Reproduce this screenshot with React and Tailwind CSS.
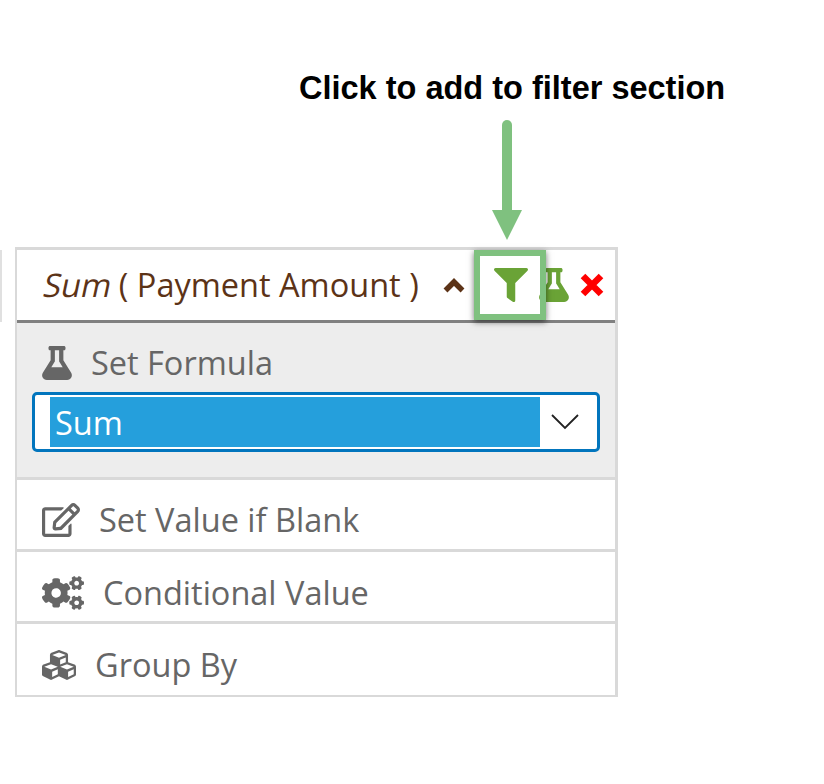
import { FaFlask, FaFilter, FaRegEdit, FaCogs, FaCubes } from 'react-icons/fa'

function Row({ icon, label, gap, height, pad }) {
  return (
    <div className={`flex items-center pl-[25px] ${pad} ${height} ${gap}`}>
      {icon}
      <span className="text-[32.5px] text-[#666]">{label}</span>
    </div>
  )
}

export default function App() {
  return (
    <div className="relative h-[784px] w-[824px] bg-white overflow-hidden font-['Open_Sans',sans-serif]">
      <h1 className="pt-[70px] pl-[299px] text-[32.5px] leading-[36px] font-bold text-black font-['Liberation_Sans',sans-serif] whitespace-nowrap">
        Click to add to filter section
      </h1>

      {/* arrow */}
      <svg className="absolute left-[490px] top-[120px]" width="34" height="122" viewBox="0 0 34 122">
        <path d="M17 5V92" stroke="#7fc17f" strokeWidth="10" strokeLinecap="round" fill="none" />
        <path d="M2 90H32L17 120Z" fill="#7fc17f" />
      </svg>

      {/* stub of the neighbouring panel */}
      <div className="absolute left-0 top-[250px] h-[72px] w-[2px] bg-[#e0e0e0]" />

      <div className="mt-[141px] ml-[15px] w-[603px] border-t-[3px] border-r-[3px] border-b-2 border-l-2 border-[#d9d9d9]">
        <div className="h-[73px] flex items-center pl-[27px] border-b-[3px] border-[#808080] text-[#5c3317]">
          <span className="inline-block text-[32.5px] -skew-x-12">Sum</span>
          <span className="text-[32.5px] ml-[7px]">( Payment Amount )</span>
          <svg className="ml-[24px]" width="22" height="15" viewBox="0 0 22 15">
            <path d="M2.5 12.5L11 4L19.5 12.5" stroke="#5c3317" strokeWidth="5.5" fill="none" />
          </svg>
          <FaFilter className="ml-[29px] text-[34px] text-[#6aa336]" />
          <FaFlask className="ml-[9px] text-[34px] text-[#6aa336]" />
          <svg className="ml-[9px]" width="24" height="24" viewBox="0 0 24 24">
            <path d="M3 3L21 21M21 3L3 21" stroke="#ff0000" strokeWidth="6.5" fill="none" />
          </svg>
        </div>

        <div className="h-[157px] bg-[#ededed] border-b-[3px] border-[#d9d9d9] pt-[20px] pl-[15px] pr-[15px]">
          <div className="flex items-center h-[40px] pl-[8px]">
            <FaFlask className="text-[34px] text-[#666]" />
            <span className="ml-[17px] text-[32.5px] text-[#666]">Set Formula</span>
          </div>
          <div className="mt-[9px] h-[60px] w-[568px] rounded-[5px] border-[3px] border-[#0275bd] bg-white flex items-center pl-[15px]">
            <div className="w-[490px] h-[50px] bg-[#259fdc] text-white text-[32.5px] leading-[52px] pl-[5px]">Sum</div>
            <svg className="ml-[10px]" width="30" height="20" viewBox="0 0 30 20">
              <path d="M2 3L15 16L28 3" stroke="#222" strokeWidth="1.8" fill="none" />
            </svg>
          </div>
        </div>

        <div className="flex flex-col divide-y-[3px] divide-[#d9d9d9]">
          <Row height="h-[72px]" pad="pt-[11px]" gap="gap-[19px]" label="Set Value if Blank" icon={<FaRegEdit className="text-[38px] text-[#666]" />} />
          <Row height="h-[72px]" pad="pt-[13px]" gap="gap-[19px]" label="Conditional Value" icon={<FaCogs className="text-[42px] text-[#666]" />} />
          <Row height="h-[71px]" pad="pt-[11px]" gap="gap-[19px]" label="Group By" icon={<FaCubes className="text-[34px] text-[#666]" />} />
        </div>
      </div>

      {/* highlight round the filter icon */}
      <div className="absolute left-[474px] top-[250px] w-[72px] h-[70px] border-[6px] border-[#7fc17f] shadow-[0_2px_6px_rgba(0,0,0,0.55)]" />
    </div>
  )
}
